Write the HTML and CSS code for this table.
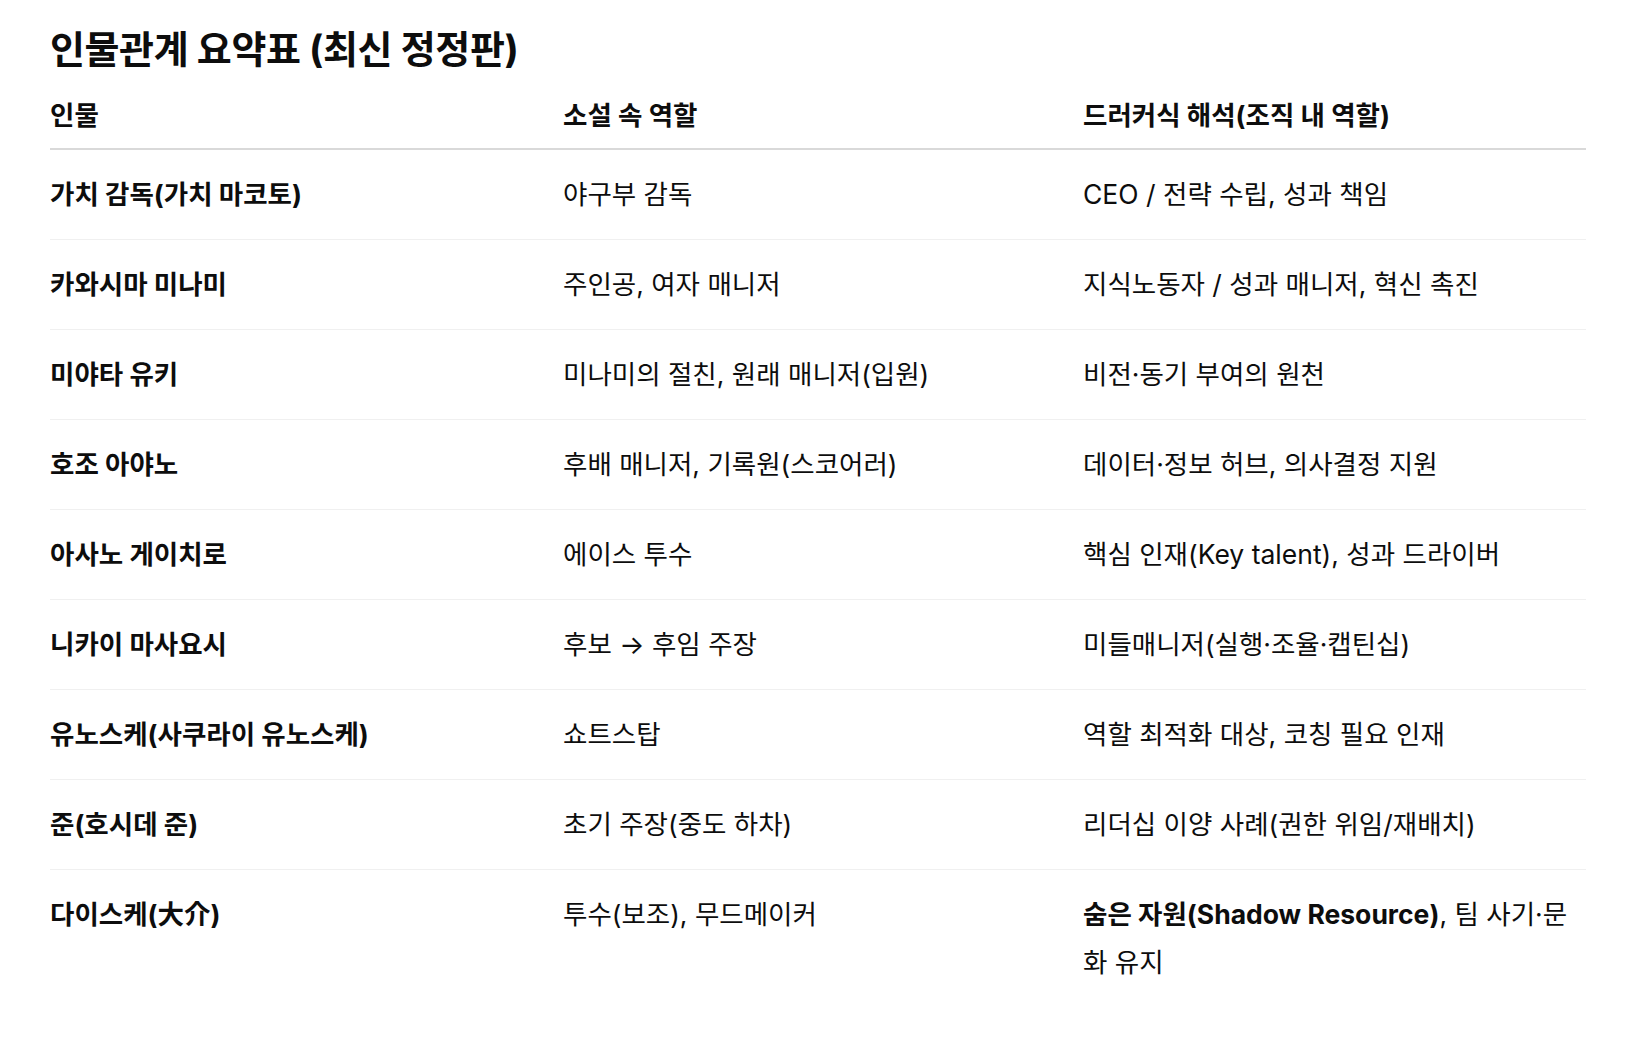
FILE: index.html
```html
<!DOCTYPE html>
<html lang="ko">
<head>
<meta charset="utf-8">
<title>인물관계 요약표</title>
<link rel="stylesheet" href="styles.css">
</head>
<body>
<main class="page">
  <h1 class="title">인물관계 요약표 (최신 정정판)</h1>
  <table class="tbl">
    <colgroup>
      <col class="c1"><col class="c2"><col class="c3">
    </colgroup>
    <thead>
      <tr><th>인물</th><th>소설 속 역할</th><th>드러커식 해석(조직 내 역할)</th></tr>
    </thead>
    <tbody>
      <tr><td class="name">가치 감독(가치 마코토)</td><td>야구부 감독</td><td>CEO / 전략 수립, 성과 책임</td></tr>
      <tr><td class="name">카와시마 미나미</td><td>주인공, 여자 매니저</td><td>지식노동자 / 성과 매니저, 혁신 촉진</td></tr>
      <tr><td class="name">미야타 유키</td><td>미나미의 절친, 원래 매니저(입원)</td><td>비전·동기 부여의 원천</td></tr>
      <tr><td class="name">호조 아야노</td><td>후배 매니저, 기록원(스코어러)</td><td>데이터·정보 허브, 의사결정 지원</td></tr>
      <tr><td class="name">아사노 게이치로</td><td>에이스 투수</td><td>핵심 인재(Key talent), 성과 드라이버</td></tr>
      <tr><td class="name">니카이 마사요시</td><td>후보 → 후임 주장</td><td>미들매니저(실행·조율·캡틴십)</td></tr>
      <tr><td class="name">유노스케(사쿠라이 유노스케)</td><td>쇼트스탑</td><td>역할 최적화 대상, 코칭 필요 인재</td></tr>
      <tr><td class="name">준(호시데 준)</td><td>초기 주장(중도 하차)</td><td>리더십 이양 사례(권한 위임/재배치)</td></tr>
      <tr class="last"><td class="name">다이스케(大介)</td><td>투수(보조), 무드메이커</td><td><strong>숨은 자원(Shadow Resource)</strong>, 팀 사기·문화 유지</td></tr>
    </tbody>
  </table>
</main>
</body>
</html>
```

FILE: styles.css
```css
html, body {
  margin: 0;
  padding: 0;
  background: #ffffff;
}

body {
  font-family: "Inter", "Noto Sans CJK KR", sans-serif;
  color: #0d0d0d;
}

.page {
  padding: 25px 0 0 50px;
}

.title {
  margin: 0 0 8px 0;
  font-size: 38px;
  line-height: 48px;
  font-weight: 700;
  letter-spacing: -0.4px;
}

.tbl {
  width: 1536px;
  table-layout: fixed;
  border-collapse: collapse;
  border-spacing: 0;
  font-size: 26.5px;
  line-height: 48px;
}

.c1 { width: 513px; }
.c2 { width: 520px; }
.c3 { width: 503px; }

.tbl th {
  text-align: left;
  font-weight: 700;
  padding: 10px 0 9px 0;
  border-bottom: 2px solid #d9d9d9;
  vertical-align: top;
}

.tbl td {
  padding: 20px 0 21px 0;
  border-bottom: 1px solid #f0f0f0;
  vertical-align: top;
  font-weight: 400;
}

.tbl td.name {
  font-weight: 700;
}

.tbl tr.last td {
  border-bottom: none;
}

.tbl strong {
  font-weight: 700;
}
```
